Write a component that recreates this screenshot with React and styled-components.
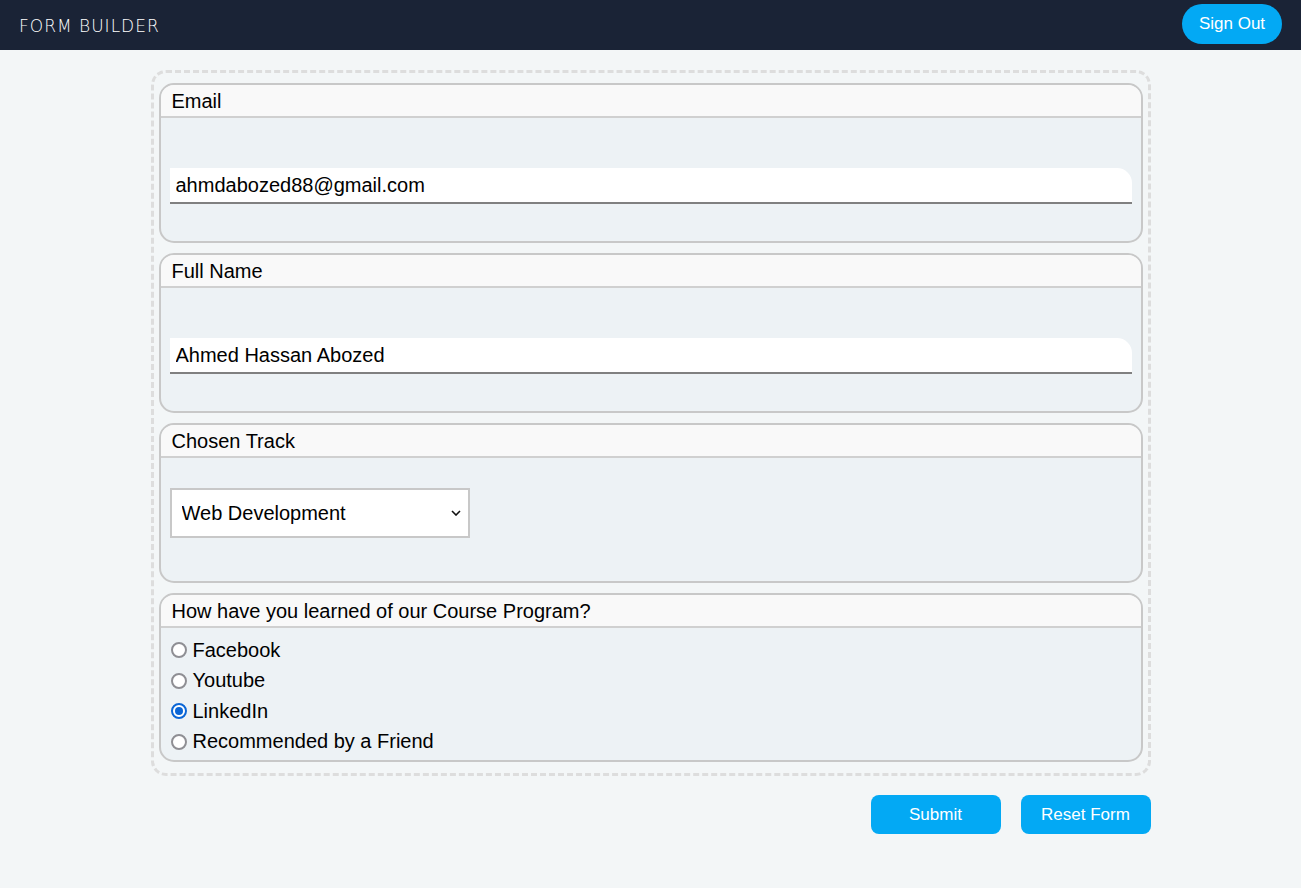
import React from "react";
import styled, { createGlobalStyle } from "styled-components";

const GlobalStyle = createGlobalStyle`
  * {
    box-sizing: border-box;
  }

  body {
    margin: 0;
    background-color: #f3f6f7;
    font-family: "Liberation Sans", Arial, sans-serif;
  }
`;

function App() {
  return (
    <>
      <GlobalStyle />
      <Header>
        <Logo>FORM BUILDER</Logo>
        <SignOut>Sign Out</SignOut>
      </Header>
      <Main>
        <FormBox>
          <Card>
            <CardTitle>Email</CardTitle>
            <CardBody>
              <TextInput defaultValue='ahmdabozed88@gmail.com' />
            </CardBody>
          </Card>
          <Card>
            <CardTitle>Full Name</CardTitle>
            <CardBody>
              <TextInput defaultValue='Ahmed Hassan Abozed' />
            </CardBody>
          </Card>
          <Card>
            <CardTitle>Chosen Track</CardTitle>
            <CardBody $select>
              <SelectWrap>
                <Select defaultValue='web'>
                  <option value='web'>Web Development</option>
                  <option value='mobile'>Mobile Development</option>
                  <option value='data'>Data Science</option>
                </Select>
                <Chevron viewBox='0 0 10 6'>
                  <path d='M1 1l4 4 4-4' />
                </Chevron>
              </SelectWrap>
            </CardBody>
          </Card>
          <Card $auto>
            <CardTitle>How have you learned of our Course Program?</CardTitle>
            <RadioList>
              {["Facebook", "Youtube", "LinkedIn", "Recommended by a Friend"].map(
                (item) => (
                  <RadioRow key={item}>
                    <Radio
                      type='radio'
                      name='source'
                      defaultChecked={item === "LinkedIn"}
                    />
                    {item}
                  </RadioRow>
                )
              )}
            </RadioList>
          </Card>
        </FormBox>
        <Actions>
          <ActionButton>Submit</ActionButton>
          <ActionButton>Reset Form</ActionButton>
        </Actions>
      </Main>
    </>
  );
}

const Header = styled.header`
  display: flex;
  justify-content: space-between;
  align-items: center;
  height: 50px;
  padding: 0 19px;
  background-color: #1a2336;
`;

const Logo = styled.span`
  margin-top: 2px;
  color: #ffffff;
  font-family: "DejaVu Sans", sans-serif;
  font-weight: 200;
  font-size: 17px;
  letter-spacing: 1px;
`;

const SignOut = styled.button`
  width: 100px;
  height: 40px;
  margin-top: -2px;
  padding-top: 1px;
  border: none;
  border-radius: 20px;
  background-color: #03a9f4;
  color: #fff;
  font-family: "Liberation Sans", Arial, sans-serif;
  font-size: 17px;
  cursor: pointer;
`;

const Main = styled.main`
  width: 1000px;
  margin: 20px auto 0;
`;

const FormBox = styled.div`
  display: flex;
  flex-direction: column;
  gap: 10px;
  padding: 10px 5px 11px;
  border: 3px dashed #dddddd;
  border-radius: 15px;
`;

const Card = styled.section`
  display: flex;
  flex-direction: column;
  flex-shrink: 0;
  height: ${(p) => (p.$auto ? "auto" : "160px")};
  border: 2px solid #c8c8c8;
  border-radius: 15px;
  background-color: #edf2f5;
  overflow: hidden;
`;

const CardTitle = styled.div`
  height: 33px;
  padding: 5px 11px 0;
  border-bottom: 2px solid #d0d0d0;
  background-color: #f9f9f9;
  color: #000;
  font-size: 20px;
`;

const CardBody = styled.div`
  flex: 1;
  padding: ${(p) => (p.$select ? "30px 9px 0" : "50px 9px 0")};
`;

const TextInput = styled.input`
  display: block;
  width: 100%;
  height: 36px;
  padding: 0 6px;
  border: none;
  border-bottom: 2px solid #808080;
  border-radius: 0 15px 0 0;
  background-color: #fff;
  color: #000;
  font-family: "Liberation Sans", Arial, sans-serif;
  font-size: 20px;
  outline: none;
`;

const SelectWrap = styled.div`
  position: relative;
  width: 300px;
`;

const Select = styled.select`
  display: block;
  width: 300px;
  height: 50px;
  padding: 0 10px;
  border: 2px solid #c8c8c8;
  border-radius: 0;
  background-color: #fff;
  color: #000;
  font-family: "Liberation Sans", Arial, sans-serif;
  font-size: 20px;
  appearance: none;
  outline: none;
`;

const Chevron = styled.svg`
  position: absolute;
  top: 22px;
  right: 9px;
  width: 10px;
  height: 6px;
  fill: none;
  stroke: #111;
  stroke-width: 1.6;
  pointer-events: none;
`;

const RadioList = styled.div`
  display: flex;
  flex-direction: column;
  padding: 7px 10px 3px;
`;

const RadioRow = styled.label`
  display: flex;
  align-items: center;
  gap: 6px;
  height: 30.5px;
  color: #000;
  font-size: 20px;
`;

const Radio = styled.input`
  appearance: none;
  display: grid;
  place-items: center;
  width: 16px;
  height: 16px;
  margin: 0;
  border: 2px solid #8f8f94;
  border-radius: 50%;
  background-color: #fff;

  &:checked {
    border-color: #0b66d6;
  }

  &:checked::after {
    content: "";
    width: 8px;
    height: 8px;
    border-radius: 50%;
    background-color: #0b66d6;
  }
`;

const Actions = styled.div`
  display: flex;
  justify-content: flex-end;
  gap: 20px;
  margin-top: 19px;
`;

const ActionButton = styled.button`
  width: 130px;
  height: 39px;
  border: none;
  border-radius: 8px;
  background-color: #03a9f4;
  color: #fff;
  font-family: "Liberation Sans", Arial, sans-serif;
  font-size: 17px;
  cursor: pointer;
`;

export default App;
